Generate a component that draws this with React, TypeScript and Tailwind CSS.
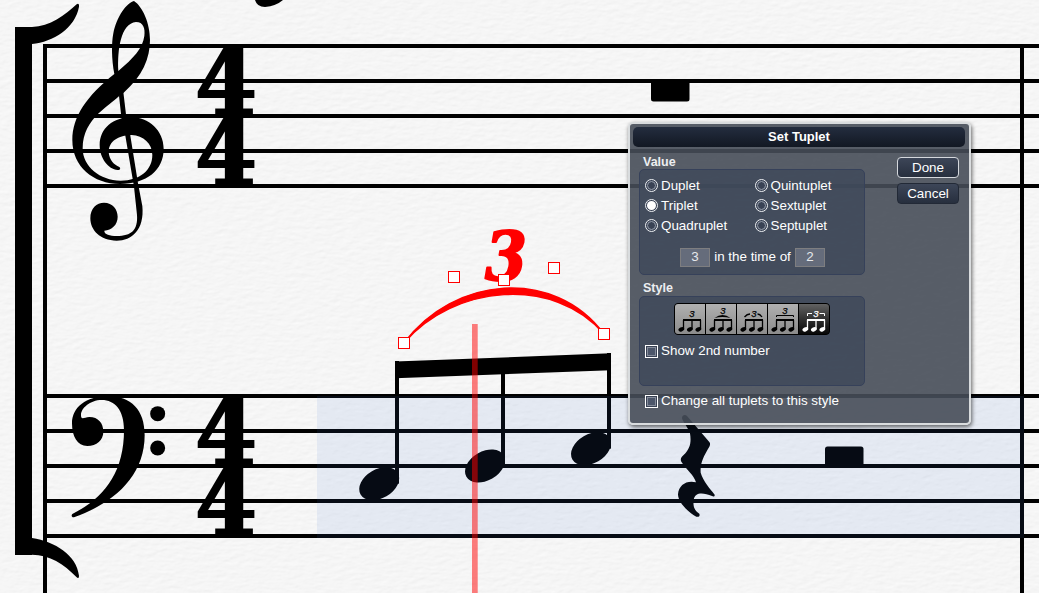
import { useState } from 'react';

const TREBLE_STAFF = [44, 79, 114, 149, 184];
const BASS_STAFF = [394, 429, 464, 499, 534];

const NOTES = [
  { cx: 379.2, cy: 483.7, stemX: 395, stemTop: 361 },
  { cx: 485, cy: 466, stemX: 501, stemTop: 360 },
  { cx: 591, cy: 448.7, stemX: 607, stemTop: 353 },
];

const HANDLES = [
  [398, 337],
  [448, 271],
  [498, 274],
  [548, 262],
  [598, 328],
];

const VALUES = [
  ['Duplet', 'Quintuplet'],
  ['Triplet', 'Sextuplet'],
  ['Quadruplet', 'Septuplet'],
];

const STYLES = ['plain', 'slur', 'broken-slur', 'line', 'bracket'];

const TimeSignature = ({ top }: { top: number }) => (
  <text
    transform={`translate(226 ${top}) scale(0.95 1)`}
    fontFamily="DejaVu Serif"
    fontWeight="bold"
    fontSize="94"
    textAnchor="middle"
    stroke="#000"
    strokeWidth="2"
  >
    <tspan x="0" y="69">
      4
    </tspan>
    <tspan x="0" y="139">
      4
    </tspan>
  </text>
);

const Score = () => (
  <svg width="1039" height="593" viewBox="0 0 1039 593" className="block">
    <defs>
      <filter id="paper" x="0" y="0" width="100%" height="100%">
        <feTurbulence type="fractalNoise" baseFrequency="0.1 0.25" numOctaves="3" seed="4" result="noise" />
        <feDiffuseLighting in="noise" surfaceScale="0.22" diffuseConstant="1.115" lightingColor="#f7f7f7">
          <feDistantLight azimuth="235" elevation="62" />
        </feDiffuseLighting>
      </filter>
    </defs>
    <rect width="1039" height="593" fill="#f5f5f5" />
    <rect width="1039" height="593" filter="url(#paper)" />

    {/* staves and bar lines */}
    {[...TREBLE_STAFF, ...BASS_STAFF].map((y) => (
      <rect key={y} x="43" y={y} width="996" height="4" />
    ))}
    <rect x="43" y="44" width="4" height="549" />
    <rect x="1020" y="44" width="4" height="549" />

    {/* system bracket */}
    <rect x="15" y="27" width="17" height="528" />
    <path
      transform="scale(0.33333)"
      d="M45,81 H96 C150,80 195,45 230,13 C235,9 238,13 237,20 C225,85 160,125 96,132 Z"
    />
    <path
      transform="translate(0 370) scale(0.33333)"
      d="M96,504 C165,515 230,555 237,617 C237,624 234,626 230,622 C190,580 150,555 96,554 H45 V504 Z"
    />

    {/* treble clef */}
    <g transform="scale(0.33333)">
      <path
        fillRule="evenodd"
        d="M343,222 C335,180 334,130 340,100 C350,50 380,8 402,3 C428,20 450,70 450,120 C450,175 428,228 371,278 L355,290 C340,303 320,318 296,340 C268,368 248,400 248,445 C248,500 300,542 362,542 C420,542 457,510 457,465 C457,430 430,407 395,405 C345,407 326,430 326,457 C328,480 342,495 358,501 C363,505 360,511 353,510 C325,508 299,475 299,435 C299,385 340,352 395,352 C445,352 491,390 491,447 C491,510 440,552 360,552 C280,552 217,500 217,420 C217,350 260,288 343,222 Z M355,213 C352,150 362,70 408,66 C430,66 436,85 433,108 C428,145 400,175 355,213 Z"
      />
      <path d="M357,287 L370,276 L379,352 L391,407 L414,550 L427,618 C434,690 395,722 350,722 C300,722 271,690 271,655 C271,625 290,608 312,608 C338,608 353,628 353,650 C353,675 335,690 313,692 C312,703 330,708 350,708 C395,708 414,690 411,645 L402,560 L376,407 L364,350 Z" />
    </g>

    {/* bass clef */}
    <g transform="translate(0 370) scale(0.33333)">
      <path d="M216,160 C216,110 260,80 320,78 C395,78 434,120 434,195 C434,320 340,400 222,442 C215,443 213,436 217,432 C310,385 372,310 372,180 C372,120 345,90 305,90 C270,90 243,115 243,135 C243,150 250,143 268,141 C295,141 310,160 310,185 C310,210 290,228 262,228 C232,228 216,200 216,160 Z" />
      <circle cx="473" cy="131" r="22.5" />
      <circle cx="473" cy="234" r="22.5" />
    </g>

    <TimeSignature top={46} />
    <TimeSignature top={396} />

    {/* notehead cut off by the top edge */}
    <path d="M255,0 Q257,7 265,7 Q276,6 283,0 Z" />

    {/* rests */}
    <rect x="651" y="80" width="38.5" height="21.5" rx="2.5" />
    <rect x="825" y="446.5" width="38.5" height="20" rx="2.5" />
    <path
      transform="translate(640 400) scale(0.33333)"
      d="M126,54 C126,45 136,43 141,48 L208,126 C211,130 211,134 208,140 C190,170 180,190 182,218 C190,245 210,265 224,284 C225,290 220,290 216,288 C190,278 165,275 161,300 C158,320 165,333 178,341 C181,348 176,352 169,350 C150,340 114,310 114,283 C116,255 140,240 168,247 C162,225 140,210 124,185 C120,177 124,172 130,166 C152,145 154,125 150,100 C146,85 126,62 126,54 Z"
    />

    {/* beamed triplet */}
    {NOTES.map(({ cx, cy, stemX, stemTop }) => (
      <g key={stemX}>
        <ellipse cx={cx} cy={cy} rx="21.5" ry="14.5" transform={`rotate(-30 ${cx} ${cy})`} />
        <rect x={stemX} y={stemTop} width="4" height={cy - stemTop} />
      </g>
    ))}
    <polygon points="395,361.5 611,353.3 611,370.3 395,378.3" />

    <rect x="317" y="396" width="707" height="142" fill="rgb(64,117,212)" fillOpacity="0.094" />
    <rect x="472" y="324" width="5.7" height="269" fill="#f00" fillOpacity="0.5" />

    {/* tuplet number, slur and its drag handles */}
    <g fill="#f00">
      <text
        transform="translate(506 279.5) scale(0.9 1)"
        fontFamily="DejaVu Serif"
        fontStyle="italic"
        fontWeight="bold"
        fontSize="67"
        textAnchor="middle"
        stroke="#f00"
        strokeWidth="2"
        strokeLinejoin="round"
      >
        3
      </text>
      <path
        d="M404,343 C454,276 554,267 604,334 C554,275.5 454,284.5 404,343 Z"
        stroke="#f00"
        strokeWidth="1.5"
      />
    </g>
    {HANDLES.map(([x, y]) => (
      <rect key={x} x={x + 0.5} y={y + 0.5} width="11" height="11" fill="#fff" stroke="#f00" />
    ))}
  </svg>
);

const StyleIcon = ({ kind }: { kind: string }) => {
  const textY = { plain: 12.5, slur: 9.5, 'broken-slur': 13, line: 9.5, bracket: 13 }[kind];
  return (
    <svg width="30" height="30" viewBox="0 0 30 30" fill="currentColor" stroke="none">
      <text
        x="17"
        y={textY}
        textAnchor="middle"
        fontFamily="Liberation Sans"
        fontStyle="italic"
        fontSize="9.5"
        stroke="currentColor"
        strokeWidth="0.25"
      >
        3
      </text>
      {kind === 'slur' && <path d="M8.5,14 Q16.5,8 24.5,14 Q16.5,12 8.5,14 Z" />}
      <g fill="none" stroke="currentColor">
        {kind === 'broken-slur' && (
          <path d="M7.5,13 Q10,10 13,10 M20.5,10 Q23,10 25,13" strokeWidth="1.3" />
        )}
        {kind === 'line' && <path d="M8.5,13 V11.5 H25.5 V13" />}
        {kind === 'bracket' && <path d="M8.5,12 V9.5 H13 M20.5,9.5 H25.5 V12" />}
        <path d="M8.5,25.5 V16 M17,25.5 V16 M25.5,25.5 V16" strokeWidth="1.3" />
      </g>
      <rect x="8" y="15" width="18" height="2" />
      <ellipse cx="6.3" cy="25.3" rx="3" ry="2.1" transform="rotate(-25 6.3 25.3)" />
      <ellipse cx="14.8" cy="25.3" rx="3" ry="2.1" transform="rotate(-25 14.8 25.3)" />
      <ellipse cx="23.3" cy="25.3" rx="3" ry="2.1" transform="rotate(-25 23.3 25.3)" />
    </svg>
  );
};

interface RadioProps {
  label: string;
  checked: boolean;
  onSelect: () => void;
}

const Radio = ({ label, checked, onSelect }: RadioProps) => (
  <button onClick={onSelect} className="flex h-5 w-[110px] items-center gap-[3px] text-left">
    <span className="flex size-[13px] items-center justify-center rounded-full border border-[#f0f2f5] bg-[#394254]">
      <span
        className={`rounded-full ${checked ? 'size-[9px] bg-white' : 'size-[9px] border border-[#98a0ad]'}`}
      />
    </span>
    <span className="pt-px">{label}</span>
  </button>
);

const Checkbox = ({ label }: { label: string }) => {
  const [on, setOn] = useState(false);
  return (
    <button onClick={() => setOn(!on)} className="flex h-5 items-center gap-[3px] text-left">
      <span className="flex size-[13px] items-center justify-center border border-white bg-[#394254]">
        <span className={`size-[9px] border border-[#858c9a] ${on ? 'bg-white' : 'bg-[#4c566a]'}`} />
      </span>
      {label}
    </button>
  );
};

const NumberBox = ({ value }: { value: number }) => (
  <span className="flex h-[19px] w-[30px] items-center justify-center border border-[#7e7e80] bg-[#656c7b] text-[#e6e8ec]">
    {value}
  </span>
);

const TupletDialog = () => {
  const [value, setValue] = useState('Triplet');
  const [style, setStyle] = useState('bracket');

  return (
    <div className="absolute left-[628px] top-[122px] h-[303px] w-[343px] rounded-[5px] border-2 border-[#d9dcde] bg-[#464c58]/90 pl-[3px] pr-1 pt-[3px] font-['Liberation_Sans',Arial,sans-serif] text-[13.4px] leading-5 text-white shadow-[1px_2px_4px_rgba(0,0,0,0.6)]">
      <h1 className="h-5 rounded-[5px] bg-linear-to-b from-[#242d3f] to-[#121823] text-center text-[13px] font-bold">
        Set Tuplet
      </h1>

      <div className="flex justify-between pl-[6px] pr-[6px]">
        <div className="w-[226px]">
          <h2 className="mt-[5px] h-[17px] pl-1 text-[12.5px] font-bold text-[#eceef1]">Value</h2>
          <section className="h-[106px] rounded-[5px] border border-[#36415a] bg-[#3e495a]/80 pl-[5px] pt-[5px]">
            {VALUES.map((row) => (
              <div key={row[0]} className="flex">
                {row.map((name) => (
                  <Radio key={name} label={name} checked={value === name} onSelect={() => setValue(name)} />
                ))}
              </div>
            ))}
            <div className="mt-3 flex items-center pl-[35px]">
              <NumberBox value={3} />
              <span className="w-[85px] whitespace-nowrap text-center">in the time of</span>
              <NumberBox value={2} />
            </div>
          </section>

          <h2 className="mt-[3px] h-[17px] pl-1 text-[12.5px] font-bold text-[#eceef1]">Style</h2>
          <section className="mt-px h-[90px] rounded-[5px] border border-[#36415a] bg-[#3e495a]/80 pl-[5px] pt-[6px]">
            <div className="ml-[29px] flex h-8 w-[156px] gap-px overflow-hidden rounded-[4px] border border-black bg-black">
              {STYLES.map((kind) => (
                <button
                  key={kind}
                  onClick={() => setStyle(kind)}
                  className={`w-[30px] ${
                    style === kind
                      ? 'bg-linear-to-b from-[#626262] to-[#080808] text-white'
                      : 'bg-linear-to-b from-[#b0b0b0] to-[#8c8c8c] text-black'
                  }`}
                >
                  <StyleIcon kind={kind} />
                </button>
              ))}
            </div>
            <div className="mt-[6px]">
              <Checkbox label="Show 2nd number" />
            </div>
          </section>
          <div className="mt-[5px] whitespace-nowrap pl-[6px]">
            <Checkbox label="Change all tuplets to this style" />
          </div>
        </div>

        <div className="flex w-[62px] flex-col gap-[5px] pt-[10px]">
          <button className="h-[21px] rounded-[4px] border border-[#d5d8dd] bg-linear-to-b from-[#3d4658] to-[#272f3e] leading-[19px]">
            Done
          </button>
          <button className="h-[21px] rounded-[4px] border border-[#222936] bg-linear-to-b from-[#3d4658] to-[#272f3e] leading-[19px]">
            Cancel
          </button>
        </div>
      </div>
    </div>
  );
};

export default function App() {
  return (
    <main className="relative h-[593px] w-[1039px] overflow-hidden bg-[#f5f5f5]">
      <Score />
      <TupletDialog />
    </main>
  );
}
